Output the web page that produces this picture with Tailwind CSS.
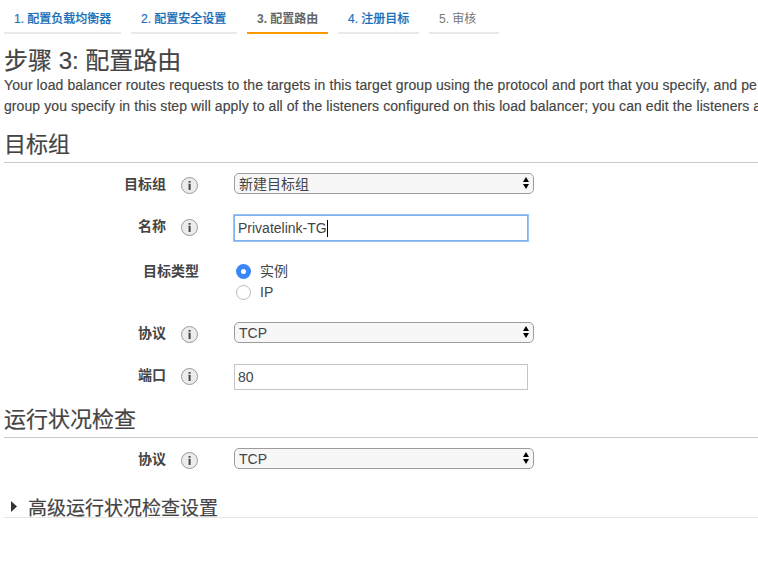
<!DOCTYPE html>
<html lang="zh-CN">
<head>
<meta charset="utf-8">
<title>步骤 3: 配置路由</title>
<script src="https://cdn.jsdelivr.net/npm/@tailwindcss/browser@4"></script>
</head>
<body class="h-[572px] overflow-hidden bg-white pl-1 font-['Liberation_Sans','Noto_Sans_CJK_SC',sans-serif] text-[14px] text-[#444]">
<svg class="hidden">
  <symbol id="info" viewBox="0 0 18 18">
    <circle cx="9.500" cy="9.500" r="8" fill="#ececec" stroke="#999" stroke-width="1"/>
    <rect x="8.600" y="5" width="2" height="1.700" fill="#444"/>
    <path d="M8.600 7.800h2v6.200h-2z" fill="#444"/>
    <path d="M7.800 7.800h1v.8h-1z" fill="#888"/>
  </symbol>
  <symbol id="updown" viewBox="0 0 6 12">
    <path d="M3 0L6 5H0zM3 12L0 7H6z" fill="#000"/>
  </symbol>
</svg>

<nav class="flex h-[34px] gap-[10px] whitespace-nowrap text-[12px] leading-[18px] text-[#1a6fb8]">
  <div class="w-[117px] border-b-2 border-[#eaeaea] pl-[10px] pt-[10px] font-medium [-webkit-text-stroke:0.2px_#1a6fb8]">1. 配置负载均衡器</div>
  <div class="w-[106px] border-b-2 border-[#eaeaea] pl-[10px] pt-[10px] font-medium [-webkit-text-stroke:0.2px_#1a6fb8]">2. 配置安全设置</div>
  <div class="w-[81px] border-b-2 border-[#f90] pl-[10px] pt-[10px] font-bold text-[#666]">3. 配置路由</div>
  <div class="w-[81px] border-b-2 border-[#eaeaea] pl-[10px] pt-[10px] font-medium [-webkit-text-stroke:0.2px_#1a6fb8]">4. 注册目标</div>
  <div class="w-[70px] border-b-2 border-[#eaeaea] pl-[10px] pt-[10px] text-[#777]">5. 审核</div>
</nav>

<h1 class="mt-[12px] h-[29px] whitespace-nowrap text-[24px] leading-[30px] [-webkit-text-stroke:0.2px_#444]">步骤 3: 配置路由</h1>
<div class="whitespace-nowrap leading-[21px] tracking-[0.085px] [-webkit-text-stroke:0.15px_#444]">
  <p>Your load balancer routes requests to the targets in this target group using the protocol and port that you specify, and pe</p>
  <p>group you specify in this step will apply to all of the listeners configured on this load balancer; you can edit the listeners a</p>
</div>

<h2 class="mt-[11px] h-[35px] border-b border-[#c8c8c8] pt-[2px] text-[22px] leading-[30px] [-webkit-text-stroke:0.2px_#444]">目标组</h2>
<div class="mt-[10px] flex h-[21px]">
  <div class="w-[162px] text-right font-bold leading-[23px]">目标组</div>
  <svg class="ml-[14px] mt-[3px] size-[18px] shrink-0"><use href="#info"/></svg>
  <div class="ml-[36px] flex w-[300px] items-center justify-between rounded-[5px] border border-[#9c9c9c] bg-[#f7f7f7] pl-1 pr-[4px] leading-[19px]"><span class="pt-[2px]">新建目标组</span><svg class="mb-px h-3 w-[6px]"><use href="#updown"/></svg></div>
</div>
<div class="mt-[21px] flex h-[26px]">
  <div class="w-[162px] text-right font-bold leading-[23px]">名称</div>
  <svg class="ml-[14px] mt-[3px] size-[18px] shrink-0"><use href="#info"/></svg>
  <div class="ml-[36px] flex w-[294px] items-center border border-[#7eb1ee] bg-white pl-[3px] pt-px shadow-[0_0_0_1px_#9ac4f5]"><span>Privatelink-TG</span><i class="h-[17px] w-px bg-black"></i></div>
</div>
<div class="mt-[20px] flex h-[42px] leading-[21px]">
  <div class="w-[195px] text-right font-bold">目标类型</div>
  <div class="ml-[37px]">
    <div class="flex h-[21px] items-center gap-[9px]"><span class="flex size-[15px] items-center justify-center rounded-full bg-[#3b87f8]"><i class="size-[5px] rounded-full bg-white"></i></span>实例</div>
    <div class="flex h-[21px] items-center gap-[9px]"><span class="size-[15px] rounded-full border border-[#bdbdbd] bg-white"></span>IP</div>
  </div>
</div>
<div class="mt-[19px] flex h-[21px]">
  <div class="w-[162px] text-right font-bold leading-[23px]">协议</div>
  <svg class="ml-[14px] mt-[3px] size-[18px] shrink-0"><use href="#info"/></svg>
  <div class="ml-[36px] flex w-[300px] items-center justify-between rounded-[5px] border border-[#9c9c9c] bg-[#f7f7f7] pl-1 pr-[4px] leading-[19px]"><span class="pt-[2px]">TCP</span><svg class="mb-px h-3 w-[6px]"><use href="#updown"/></svg></div>
</div>
<div class="mt-[21px] flex h-[26px]">
  <div class="w-[162px] text-right font-bold leading-[23px]">端口</div>
  <svg class="ml-[14px] mt-[3px] size-[18px] shrink-0"><use href="#info"/></svg>
  <div class="ml-[36px] flex w-[294px] items-center border border-[#c4c4c4] bg-white pl-[3px]">80</div>
</div>

<h2 class="mt-[13px] h-[35px] border-b border-[#c8c8c8] pt-[2px] text-[22px] leading-[30px] [-webkit-text-stroke:0.2px_#444]">运行状况检查</h2>
<div class="mt-[10px] flex h-[21px]">
  <div class="w-[162px] text-right font-bold leading-[23px]">协议</div>
  <svg class="ml-[14px] mt-[3px] size-[18px] shrink-0"><use href="#info"/></svg>
  <div class="ml-[36px] flex w-[300px] items-center justify-between rounded-[5px] border border-[#9c9c9c] bg-[#f7f7f7] pl-1 pr-[4px] leading-[19px]"><span class="pt-[2px]">TCP</span><svg class="mb-px h-3 w-[6px]"><use href="#updown"/></svg></div>
</div>

<div class="mt-[25px] flex h-[24px] items-center border-b border-[#e6e6e6] pl-[7px] text-[19px] leading-[24px]">
  <svg class="mt-px h-[11px] w-[6px]" viewBox="0 0 6 11"><path d="M0 0L6 5.500L0 11z" fill="#333"/></svg>
  <span class="ml-[11px] pt-[6px] [-webkit-text-stroke:0.2px_#444]">高级运行状况检查设置</span>
</div>
</body>
</html>
